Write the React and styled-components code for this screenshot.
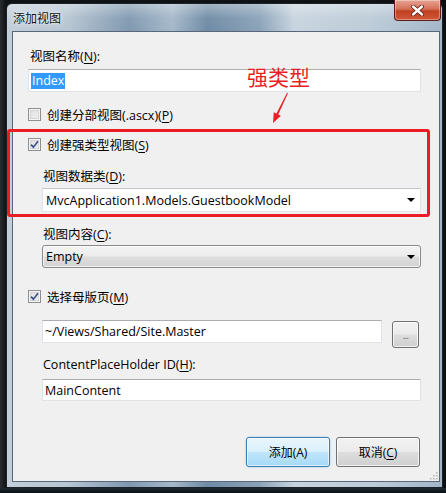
import React from 'react';
import styled, { createGlobalStyle, css } from 'styled-components';

const Global = createGlobalStyle`
  html, body { margin: 0; padding: 0; }
  body {
    width: 446px; height: 493px; overflow: hidden;
    background: #14181c;
    font-family: "Open Sans", "Noto Sans CJK SC", sans-serif;
  }
`;

const Stage = styled.div`
  position: relative;
  width: 446px;
  height: 493px;
  box-sizing: border-box;
  padding-top: 3px;
  overflow: hidden;
  background:
    linear-gradient(180deg, rgba(0,0,0,0) 0 488px, #1d2a30 488px, #0b0f12 493px),
    linear-gradient(90deg, #2a2c2e 0, #101316 6px, #0f1215 440px, #0c0e10 446px);
`;

const Window = styled.div`
  width: 437px;
  height: 485px;
  margin-left: 6px;
  box-sizing: border-box;
  border: 1px solid #1a2129;
  border-radius: 6px 6px 0 0;
  padding: 0 2px 5px 5px;
  display: flex;
  flex-direction: column;
  background:
    linear-gradient(180deg, rgba(255,255,255,0.35) 0, rgba(255,255,255,0.05) 14px, rgba(255,255,255,0) 28px),
    linear-gradient(90deg, #c2ced9 0%, #b7c5d2 14%, #7f98b0 28%, #a5b8c9 38%, #6f8ba5 46%, #8aa2b8 58%, #c7d4df 66%, #bccbd8 84%, #a3b6c8 100%);
`;

const TitleBar = styled.div`
  height: 27px;
  margin-left: -5px;
  margin-right: -2px;
  padding-left: 6px;
  display: flex;
  align-items: center;
  justify-content: space-between;
`;

const Title = styled.span`
  font-family: "Noto Sans CJK SC", sans-serif;
  font-size: 12px;
  color: #111;
  text-shadow: 0 0 6px rgba(255,255,255,0.9), 0 0 2px rgba(255,255,255,0.9);
`;

const CloseButton = styled.div`
  align-self: flex-start;
  margin-top: -4px;
  margin-right: 1px;
  width: 47px;
  height: 21px;
  box-sizing: border-box;
  border: 1px solid #5b1f16;
  border-top: none;
  border-radius: 0 0 4px 4px;
  display: flex;
  align-items: center;
  justify-content: center;
  background: linear-gradient(180deg, #e8a493 0%, #d4705a 45%, #c1401f 55%, #d0583a 100%);
  box-shadow: inset 0 0 0 1px rgba(255,255,255,0.35);
`;

const Client = styled.div`
  position: relative;
  flex: 1;
  box-sizing: border-box;
  border: 1px solid #59677a;
  background: #f0f0f0;
  padding: 17px 18px 0 15px;
  display: flex;
  flex-direction: column;
  font-size: 12.5px;
  color: #000;
`;

const Label = styled.div`
  height: 16px;
  line-height: 16px;
  padding-left: ${p => p.$indent ? 15 : 2}px;
  margin-top: ${p => p.$mt || 0}px;
  white-space: nowrap;
`;

const Key = styled.u`
  text-underline-offset: 2px;
`;

const TextInput = styled.div`
  height: ${p => p.$h || 23}px;
  box-sizing: border-box;
  margin-top: ${p => p.$mt || 0}px;
  margin-left: ${p => p.$indent ? 14 : 0}px;
  flex: ${p => p.$grow ? 1 : 'none'};
  background: #fff;
  border: 1px solid #dfe3e8;
  border-top-color: #abadb3;
  display: flex;
  align-items: center;
  padding-left: 2px;
  white-space: nowrap;
`;

const Selected = styled.span`
  background: #3399ff;
  color: #fff;
  padding: 0 1px;
  line-height: 16px;
`;

const Combo = styled.div`
  height: ${p => p.$h || 24}px;
  box-sizing: border-box;
  margin-top: ${p => p.$mt || 0}px;
  margin-left: 14px;
  padding: 0 5px 0 3px;
  display: flex;
  align-items: center;
  justify-content: space-between;
  white-space: nowrap;
  ${p => p.$button ? css`
    border: 1px solid #8a8a8a;
    border-radius: 3px;
    background: linear-gradient(180deg, #f4f4f4 0%, #ececec 48%, #dedede 52%, #d2d2d2 100%);
    box-shadow: inset 0 0 0 1px rgba(255,255,255,0.7);
  ` : css`
    background: #fff;
    border: 1px solid #dfe3e8;
    border-top-color: #c3c6cc;
  `}
`;

const Arrow = styled.span`
  width: 0; height: 0;
  border-left: 4px solid transparent;
  border-right: 4px solid transparent;
  border-top: 4px solid #000;
`;

const CheckRow = styled.label`
  display: flex;
  align-items: center;
  gap: 6px;
  height: 16px;
  margin-top: ${p => p.$mt || 0}px;
  white-space: nowrap;
`;

const Box = styled.span`
  width: 13px;
  height: 13px;
  flex: none;
  box-sizing: border-box;
  border: 1px solid #8f8f8f;
  background: linear-gradient(135deg, #dcdcdc 0%, #f4f4f4 100%);
  box-shadow: inset 0 0 0 1px #f6f6f6, inset 0 0 0 2px #d4d4d4;
  display: flex;
  align-items: center;
  justify-content: center;
`;

const Row = styled.div`
  display: flex;
  align-items: flex-start;
  margin-top: ${p => p.$mt || 0}px;
  margin-left: 14px;
  margin-right: 2px;
`;

const Browse = styled.div`
  width: 27px;
  height: 27px;
  box-sizing: border-box;
  margin-left: 10px;
  margin-top: 1px;
  border: 1px solid #707070;
  border-radius: 3px;
  background: linear-gradient(180deg, #f2f2f2 0%, #ebebeb 48%, #dddddd 52%, #cfcfcf 100%);
  box-shadow: inset 0 0 0 1px rgba(255,255,255,0.75);
  display: flex;
  align-items: center;
  justify-content: center;
  font-size: 9px;
  color: #555;
  letter-spacing: -0.5px;
  padding-top: 2px;
`;

const Footer = styled.div`
  display: flex;
  justify-content: flex-end;
  gap: 6px;
  margin-top: 36px;
  margin-right: 1px;
`;

const Button = styled.div`
  width: 84px;
  height: 30px;
  box-sizing: border-box;
  border-radius: 3px;
  display: flex;
  align-items: center;
  justify-content: center;
  font-size: 12px;
  ${p => p.$primary ? css`
    border: 1px solid #3c7fb1;
    background: linear-gradient(180deg, #eaf6fd 0%, #d9f0fc 48%, #bee6fd 52%, #a7d9f5 100%);
    box-shadow: inset 0 0 0 1px rgba(255,255,255,0.6), 0 0 2px rgba(60,160,220,0.6);
  ` : css`
    border: 1px solid #707070;
    background: linear-gradient(180deg, #f2f2f2 0%, #ebebeb 48%, #dddddd 52%, #cfcfcf 100%);
    box-shadow: inset 0 0 0 1px rgba(255,255,255,0.75);
  `}
`;

const Grip = styled.svg`
  position: absolute;
  right: 1px;
  bottom: 1px;
`;

const Callout = styled.div`
  position: absolute;
  left: 247px;
  top: 64px;
  font-family: "Noto Sans CJK SC", sans-serif;
  font-size: 21px;
  line-height: 24px;
  color: #ea1f25;
`;

const CalloutArrow = styled.svg`
  position: absolute;
  left: 268px;
  top: 90px;
`;

const Highlight = styled.div`
  position: absolute;
  left: 7px;
  top: 129px;
  width: 423px;
  height: 88px;
  box-sizing: border-box;
  border: 3px solid #ec1c24;
  border-radius: 3px;
  pointer-events: none;
`;

const Check = () => (
  <svg width="9" height="9" viewBox="0 0 9 9">
    <path d="M1 4.6 L3.4 7.2 L8 1.2" fill="none" stroke="#3e5686" strokeWidth="1.7" />
  </svg>
);

const Checkbox = ({ checked, children }) => (
  <CheckRow>
    <Box>{checked && <Check />}</Box>
    <span>{children}</span>
  </CheckRow>
);

const Spacer = styled.div`
  height: ${p => p.$h}px;
  flex: none;
`;

export default function App() {
  return (
    <>
      <Global />
      <Stage>
        <Window>
          <TitleBar>
            <Title>添加视图</Title>
            <CloseButton>
              <svg width="13" height="11" viewBox="0 0 13 11">
                <path d="M2 1.5 L11 9.5 M11 1.5 L2 9.5" stroke="#5a1a10" strokeWidth="4" strokeLinecap="round" />
                <path d="M2 1.5 L11 9.5 M11 1.5 L2 9.5" stroke="#fff" strokeWidth="2.4" strokeLinecap="round" />
              </svg>
            </CloseButton>
          </TitleBar>
          <Client>
            <Label>视图名称(<Key>N</Key>):</Label>
            <TextInput $mt={4}><Selected>Index</Selected></TextInput>
            <Spacer $h={14} />
            <Checkbox>创建分部视图(.ascx)(<Key>P</Key>)</Checkbox>
            <Spacer $h={14} />
            <Checkbox checked>创建强类型视图(<Key>S</Key>)</Checkbox>
            <Label $indent $mt={17}>视图数据类(<Key>D</Key>):</Label>
            <Combo $mt={3}>MvcApplication1.Models.GuestbookModel<Arrow /></Combo>
            <Label $indent $mt={15}>视图内容(<Key>C</Key>):</Label>
            <Combo $button $h={23} $mt={2}>Empty<Arrow /></Combo>
            <Spacer $h={20} />
            <Checkbox checked>选择母版页(<Key>M</Key>)</Checkbox>
            <Row $mt={16}>
              <TextInput $grow>~/Views/Shared/Site.Master</TextInput>
              <Browse>...</Browse>
            </Row>
            <Label $indent $mt={9}>ContentPlaceHolder ID(<Key>H</Key>):</Label>
            <TextInput $indent $h={22} $mt={6}>MainContent</TextInput>
            <Footer>
              <Button $primary>添加(A)</Button>
              <Button>取消(<Key>C</Key>)</Button>
            </Footer>
            <Grip width="10" height="10" viewBox="0 0 10 10">
              {[[8, 2], [8, 5], [5, 5], [8, 8], [5, 8], [2, 8]].map(([x, y], i) => (
                <rect key={i} x={x} y={y} width="1.5" height="1.5" fill="#b5b5b5" />
              ))}
            </Grip>
          </Client>
        </Window>
        <Callout>强类型</Callout>
        <CalloutArrow width="24" height="36" viewBox="0 0 24 36">
          <polygon points="19.95,3.2 10.25,24.4 12.95,25.74 5,33 5.75,22.26 8.45,23.6 19.05,2.8" fill="#ea1f25" />
        </CalloutArrow>
        <Highlight />
      </Stage>
    </>
  );
}
